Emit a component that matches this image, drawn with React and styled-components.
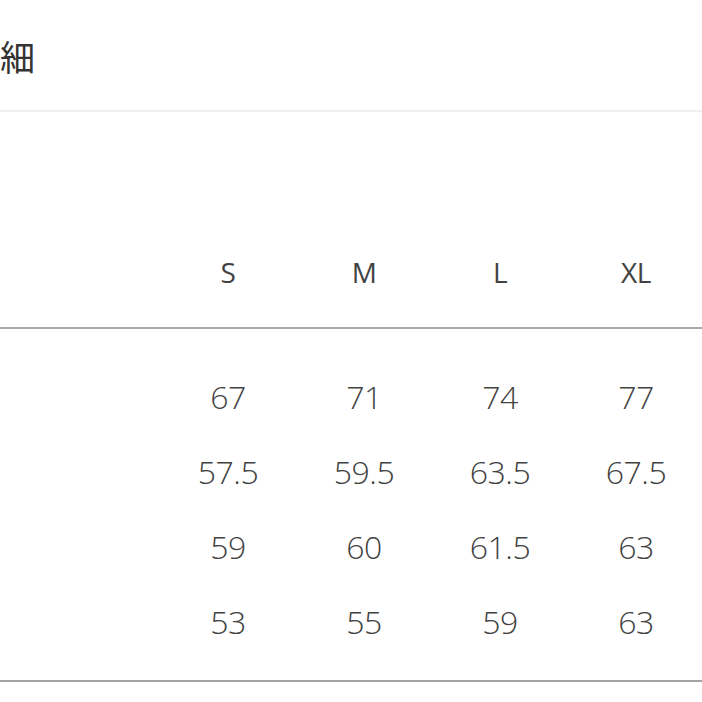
import styled, {createGlobalStyle} from 'styled-components';

const GlobalStyle = createGlobalStyle`
  html, body {
    margin: 0;
    padding: 0;
    background: #ffffff;
    overflow: hidden;
  }
`;

const Page = styled.div`
  width: 702px;
  height: 702px;
  overflow: hidden;
  background: #fff;
  font-family: 'Open Sans', 'Noto Sans', sans-serif;
  color: #424242;
`;

const TitleBar = styled.div`
  height: 110px;
  display: flex;
  align-items: center;
  border-bottom: 2px solid #efefef;
`;

const Title = styled.h2`
  margin: 0 0 0 0;
  font-family: 'Noto Sans CJK JP', 'Noto Sans CJK SC', sans-serif;
  font-weight: 400;
  font-size: 35px;
  color: #333;
`;

const Table = styled.div`
  width: 704px;
`;

const Head = styled.div`
  padding: 122px 0 18px;
  border-bottom: 2px solid #a9a9a9;
`;

const Body = styled.div`
  padding: 30px 0 21px;
  border-bottom: 2px solid #a3a3a3;
`;

const Row = styled.div`
  display: grid;
  grid-template-columns: 160px repeat(4, 136px);
  height: 75px;
  align-items: center;
`;

const Cell = styled.div`
  text-align: center;
  font-size: ${p => (p.$head ? '28px' : '32px')};
  font-weight: ${p => (p.$head ? 400 : 300)};
  letter-spacing: -0.5px;
`;

const sizes = ['S', 'M', 'L', 'XL'];
const rows = [
  ['', '67', '71', '74', '77'],
  ['', '57.5', '59.5', '63.5', '67.5'],
  ['', '59', '60', '61.5', '63'],
  ['', '53', '55', '59', '63'],
];

export default function App() {
  return (
    <Page>
      <GlobalStyle />
      <TitleBar>
        <Title>細</Title>
      </TitleBar>
      <Table>
        <Head>
          <Row>
            <Cell $head />
            {sizes.map(s => (
              <Cell $head key={s}>{s}</Cell>
            ))}
          </Row>
        </Head>
        <Body>
          {rows.map((r, i) => (
            <Row key={i}>
              {r.map((v, j) => (
                <Cell key={j}>{v}</Cell>
              ))}
            </Row>
          ))}
        </Body>
      </Table>
    </Page>
  );
}
